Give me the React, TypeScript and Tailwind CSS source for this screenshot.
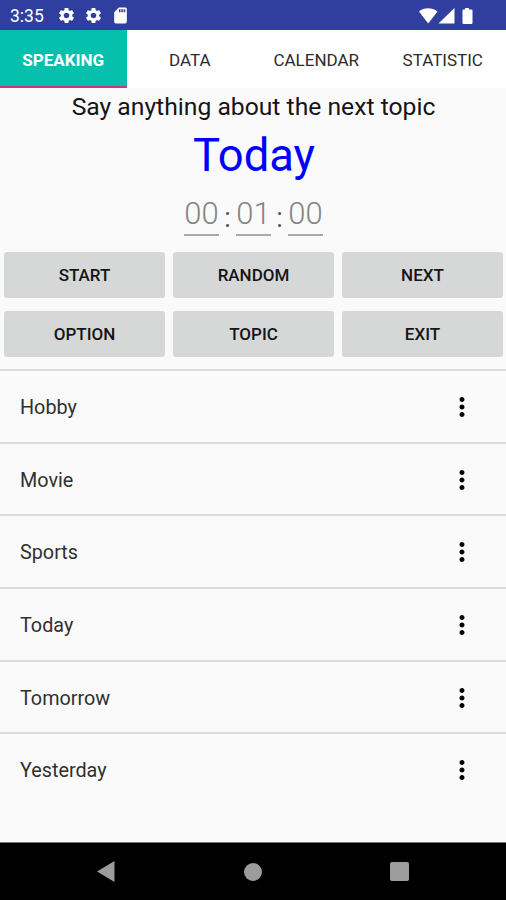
import { MdSettings, MdSdCard, MdMoreVert } from "react-icons/md";

const tabs = [
  { name: "SPEAKING", active: true },
  { name: "DATA", active: false },
  { name: "CALENDAR", active: false },
  { name: "STATISTIC", active: false },
];

const buttons = ["START", "RANDOM", "NEXT", "OPTION", "TOPIC", "EXIT"];

const topics = ["Hobby", "Movie", "Sports", "Today", "Tomorrow", "Yesterday"];

const StatusBar = () => {
  return (
    <div className="h-[30px] shrink-0 bg-[#303f9f] text-white flex items-center justify-between pl-[10px] pr-[32px]">
      <div className="flex items-center">
        <span className="w-[47px] text-[17.5px] leading-[30px] pt-[2px]">3:35</span>
        <MdSettings className="size-[19px]" />
        <MdSettings className="size-[19px] ml-2" />
        <MdSdCard className="size-[19px] ml-[8px]" />
      </div>
      <svg width="55" height="17" viewBox="0 -1 55 17" fill="currentColor">
        <path d="M0 3.500C5 -.8 13 -.8 18.500 3.500L9.200 15.500Z" />
        <path d="M19.500 15.500L35.500 0V15.500Z" />
        <path d="M46 0h4v1.500h2.500q1 0 1 1V15q0 1-1 1h-8q-1 0-1-1V2.500q0-1 1-1H46z" />
      </svg>
    </div>
  );
};

const Tabs = () => {
  return (
    <div className="h-[58px] shrink-0 bg-white grid grid-cols-4 text-[17px]">
      {tabs.map((tab) => (
        <button
          key={tab.name}
          className={
            tab.active
              ? "bg-[#04c0ad] text-white font-bold border-b-2 border-[#d0386c] pt-[5px]"
              : "text-[#2b2b2b] pt-[3px]"
          }
        >
          {tab.name}
        </button>
      ))}
    </div>
  );
};

const Timer = () => {
  return (
    <div className="flex justify-center h-[54px] pt-[11px] pl-px text-[31px] text-[#858585]">
      <span className="w-[35px] h-[39px] leading-[33px] text-center font-light border-b-2 border-[#a9a9a9]">00</span>
      <span className="w-[17px] leading-[42px] text-center text-[27px] text-[#505050]">:</span>
      <span className="w-[35px] h-[39px] leading-[33px] text-center font-light border-b-2 border-[#a9a9a9]">01</span>
      <span className="w-[17px] leading-[42px] text-center text-[27px] text-[#505050]">:</span>
      <span className="w-[35px] h-[39px] leading-[33px] text-center font-light border-b-2 border-[#a9a9a9]">00</span>
    </div>
  );
};

const NavBar = () => {
  return (
    <div className="h-[58px] shrink-0 bg-black border-t border-[#777] flex items-center justify-between px-[97px] text-[#9c9c9c]">
      <svg width="18" height="21" viewBox="0 0 18 21" fill="currentColor">
        <path d="M0 10.500L17.500 0V21Z" />
      </svg>
      <div className="size-[18px] rounded-full bg-[#9c9c9c]" />
      <div className="size-[19px] rounded-[2px] bg-[#9c9c9c]" />
    </div>
  );
};

export default function App() {
  return (
    <div className="w-[506px] h-[900px] overflow-hidden flex flex-col bg-[#fafafa] font-['Roboto',sans-serif]">
      <StatusBar />
      <Tabs />

      <p className="h-[38px] text-[24.7px] leading-[37px] text-center text-[#151515] pl-px">
        Say anything about the next topic
      </p>
      <h1 className="h-[60px] text-[45.4px] leading-[59px] text-center text-[#0000ff] pl-[2px]">Today</h1>
      <Timer />

      <div className="grid grid-cols-3 gap-x-2 gap-y-[13px] pl-1 pr-[3px] pt-[12px] pb-[12px]">
        {buttons.map((name) => (
          <button
            key={name}
            className="h-[46px] rounded-[3px] bg-[#d6d7d7] text-[17px] font-medium text-[#151515] pt-[2px]"
          >
            {name}
          </button>
        ))}
      </div>

      <div className="grow">
        {topics.map((topic) => (
          <div
            key={topic}
            className="h-[72.7px] border-t-2 border-[#dcdcdc] flex items-center justify-between pl-[20px] pr-[29px] text-[19.8px] text-[#303030]"
          >
            <span className="pt-[3px]">{topic}</span>
            <MdMoreVert className="size-[30px] text-black mt-px" />
          </div>
        ))}
      </div>

      <NavBar />
    </div>
  );
}
